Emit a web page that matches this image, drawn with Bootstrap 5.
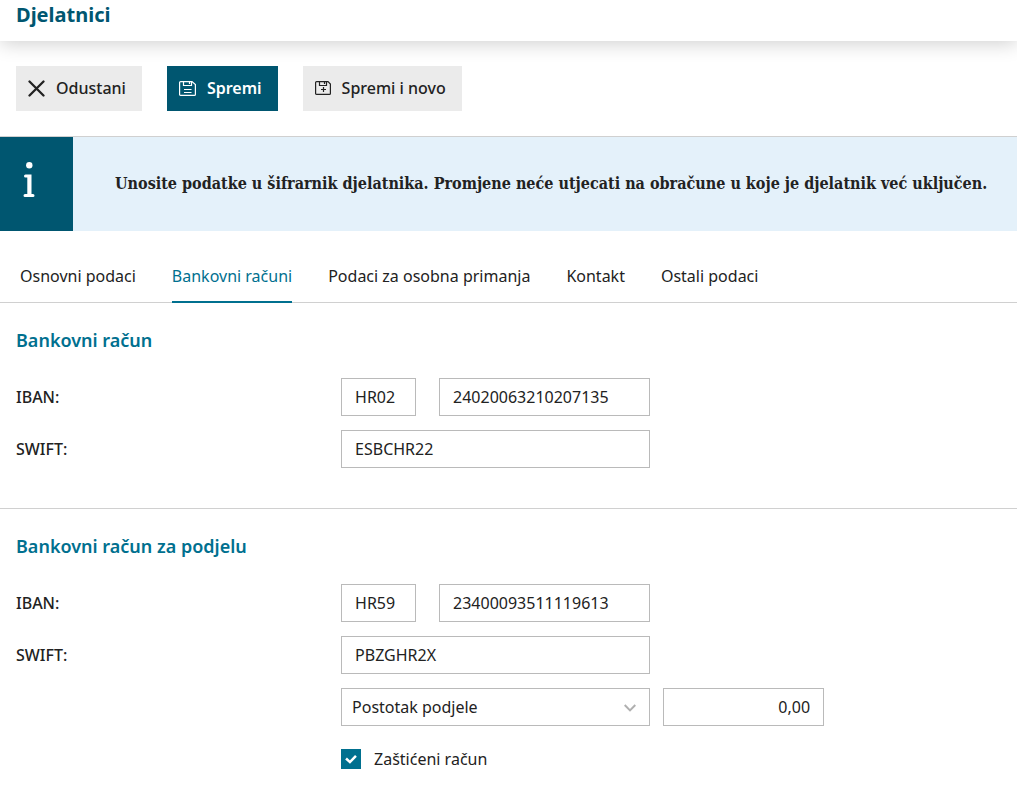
<!DOCTYPE html>
<html lang="hr">
<head>
<meta charset="utf-8">
<meta name="viewport" content="width=device-width, initial-scale=1">
<title>Djelatnici</title>
<link href="https://cdn.jsdelivr.net/npm/bootstrap@5.3.0/dist/css/bootstrap.min.css" rel="stylesheet">
<style>
  :root { --deep: #005670; --teal: #00708f; --ink: #222; --line: #d0d0d0; --field: #bababa; }
  body { font-family: "Noto Sans", sans-serif; font-size: 16px; line-height: 24px; color: var(--ink); background: #fff; }
  .page-head { height: 41px; box-shadow: 0 2px 20px rgba(0,0,0,.2); }
  .page-title { font-size: 20px; line-height: 30px; font-weight: 700; color: var(--deep); }
  .toolbar { gap: 25px; padding-top: 25px; padding-bottom: 25px; }
  .tool-btn { --bs-btn-border-radius: 0; --bs-btn-border-width: 0; --bs-btn-bg: #ebebeb; --bs-btn-color: var(--ink);
    --bs-btn-hover-bg: #dedede; --bs-btn-font-weight: 500; --bs-btn-line-height: 24px;
    height: 45px; gap: 11px; padding: 9px 16px 10px 12px; }
  .tool-btn-main { --bs-btn-bg: var(--deep); --bs-btn-color: #fff; --bs-btn-hover-bg: var(--teal); --bs-btn-hover-color: #fff; --bs-btn-font-weight: 600; }
  .notice { min-height: 95px; border-top: 1px solid var(--line); background: #e4f1fa; }
  .notice-icon { width: 73px; padding: 25px 0 0 23px; background: var(--deep); }
  .notice-text { padding-left: 42px; font-family: "Roboto Slab", "DejaVu Serif Condensed", "DejaVu Serif", serif; font-size: 16px; font-weight: 700; }
  .form-tabs { gap: 36px; padding: 33px 20px 0; border-bottom: 1px solid var(--line); }
  .form-tabs .nav-link { padding: 0 0 13px; margin-bottom: -1px; color: var(--ink); border-bottom: 2px solid transparent; }
  .form-tabs .nav-link.active { color: var(--teal); border-color: var(--teal); }
  .form-part { padding-top: 25px; }
  .form-part + .form-part { border-top: 1px solid var(--line); margin-top: 40px; }
  .part-title { font-size: 18px; line-height: 24px; font-weight: 600; color: var(--teal); margin-bottom: 26px; }
  .rows { gap: 14px; }
  .rows > div { min-height: 38px; }
  .row-label { width: 33%; font-weight: 500; }
  .field-set { width: 309px; gap: 23px; }
  .box { height: 38px; padding: 0 13px 1px; font-size: 16px; color: var(--ink); border: 1px solid var(--field); border-radius: 0; background-color: #fff; }
  .box-code { width: 75px; flex: none; }
  .box-amount { width: 161px; margin-left: 13px; }
  .box-choice { padding: 0 10px 1px; appearance: none; }
  .choice-arrow { right: 14px; top: 16px; pointer-events: none; }
  .tick[type=checkbox] { width: 20px; height: 20px; margin: 0; border-radius: 0; }
  .tick-label { padding-left: 13px; }
  .tick:checked { border-color: var(--teal); background-color: var(--teal);
    background-image: url("data:image/svg+xml,%3csvg xmlns='http://www.w3.org/2000/svg' viewBox='0 0 20 20'%3e%3cpath fill='none' stroke='%23fff' stroke-width='2.8' d='M4.500 9.500l4.300 3.900 6.700-6.800'/%3e%3c/svg%3e"); }
</style>
</head>
<body>
<header class="page-head px-3"><h1 class="page-title m-0">Djelatnici</h1></header>

<div class="toolbar d-flex flex-wrap px-3">
  <button type="button" class="btn tool-btn d-flex align-items-center">
    <svg width="17" height="17" viewBox="0 0 17 17" fill="none" stroke="currentColor" stroke-width="2.300" stroke-linecap="round" aria-hidden="true"><path d="M1.500 1.500l14 14M15.500 1.500l-14 14"/></svg>
    Odustani
  </button>
  <button type="button" class="btn tool-btn tool-btn-main d-flex align-items-center">
    <svg width="17" height="15" viewBox="0 0 17 15" fill="none" stroke="currentColor" stroke-width="1.200" aria-hidden="true"><path d="M.6 1.500q0-.9 1-.9H13l3.400 3v9.900q0 .9-1 .9H1.600q-1 0-1-.9zM4.500 .5v4h8v-4M10.500 1v2M5 8.500h7.500M5 11.500h7.500"/></svg>
    Spremi
  </button>
  <button type="button" class="btn tool-btn d-flex align-items-center">
    <svg width="16" height="14" viewBox="0 0 16 14" fill="none" stroke="currentColor" stroke-width="1.200" aria-hidden="true"><path d="M.6 1.500q0-.9 1-.9H13l2.400 2.400v9.500q0 .9-1 .9H1.600q-1 0-1-.9zM4.500 .5v4h7v-4M9.500 1v2M8.500 6v5M6 8.500h5"/></svg>
    Spremi i novo
  </button>
</div>

<div class="notice d-flex" role="note">
  <div class="notice-icon flex-shrink-0">
    <svg width="12" height="36" viewBox="0 0 12 36" fill="#fff" aria-hidden="true"><circle cx="6.300" cy="3.300" r="3.200"/><path d="M2.500 12.500H8.500V32H10q1.500 0 1.500 1.500T10 35H2q-1.500 0-1.500-1.500T2 32H4.300V15.500H2.500Q1 15.500 1 14t1.500-1.500z"/></svg>
  </div>
  <p class="notice-text align-self-center m-0">Unosite podatke u šifrarnik djelatnika. Promjene neće utjecati na obračune u koje je djelatnik već uključen.</p>
</div>

<nav class="nav form-tabs">
  <a class="nav-link" href="#osnovni">Osnovni podaci</a>
  <a class="nav-link active" aria-current="page" href="#bankovni">Bankovni računi</a>
  <a class="nav-link" href="#primanja">Podaci za osobna primanja</a>
  <a class="nav-link" href="#kontakt">Kontakt</a>
  <a class="nav-link" href="#ostali">Ostali podaci</a>
</nav>

<form>
  <section class="form-part px-3">
    <h2 class="part-title">Bankovni račun</h2>
    <div class="rows d-flex flex-column">
      <div class="d-flex align-items-center">
        <label class="row-label" for="iban1">IBAN:</label>
        <div class="field-set d-flex">
          <input class="form-control box box-code" id="iban1" value="HR02">
          <input class="form-control box" aria-label="Broj računa" value="24020063210207135">
        </div>
      </div>
      <div class="d-flex align-items-center">
        <label class="row-label" for="swift1">SWIFT:</label>
        <div class="field-set"><input class="form-control box" id="swift1" value="ESBCHR22"></div>
      </div>
    </div>
  </section>

  <section class="form-part px-3">
    <h2 class="part-title">Bankovni račun za podjelu</h2>
    <div class="rows d-flex flex-column">
      <div class="d-flex align-items-center">
        <label class="row-label" for="iban2">IBAN:</label>
        <div class="field-set d-flex">
          <input class="form-control box box-code" id="iban2" value="HR59">
          <input class="form-control box" aria-label="Broj računa za podjelu" value="23400093511119613">
        </div>
      </div>
      <div class="d-flex align-items-center">
        <label class="row-label" for="swift2">SWIFT:</label>
        <div class="field-set"><input class="form-control box" id="swift2" value="PBZGHR2X"></div>
      </div>
      <div class="d-flex align-items-center">
        <div class="row-label"></div>
        <div class="field-set position-relative">
          <select class="form-control box box-choice" aria-label="Način podjele"><option>Postotak podjele</option></select>
          <svg class="choice-arrow position-absolute" width="12" height="8" viewBox="0 0 12 8" fill="none" stroke="#b0b0b0" stroke-width="2" aria-hidden="true"><path d="M.7 1L6 6.400 11.300 1"/></svg>
        </div>
        <input class="form-control box box-amount text-end" aria-label="Iznos podjele" value="0,00">
      </div>
      <div class="d-flex align-items-center">
        <div class="row-label"></div>
        <div class="d-flex align-items-center">
          <input class="form-check-input tick" type="checkbox" id="zasticeni" checked>
          <label class="tick-label" for="zasticeni">Zaštićeni račun</label>
        </div>
      </div>
    </div>
  </section>
</form>
<script src="https://cdn.jsdelivr.net/npm/bootstrap@5.3.0/dist/js/bootstrap.bundle.min.js"></script>
</body>
</html>
